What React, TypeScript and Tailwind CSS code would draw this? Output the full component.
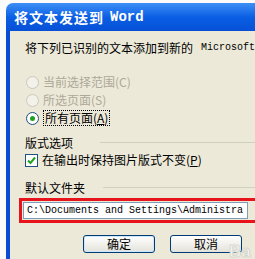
const cn = { fontFamily: '"Noto Sans CJK SC", "Noto Sans", sans-serif' };
const mono = { fontFamily: '"Liberation Mono", "DejaVu Sans Mono", monospace' };

function Radio({ checked, disabled }: { checked?: boolean; disabled?: boolean }) {
  return (
    <span
      className={
        "flex items-center justify-center w-[13px] h-[13px] rounded-full border " +
        (disabled ? "border-[#cac8bb] bg-[#f2f1ea]" : "border-[#1c5180] bg-white")
      }
    >
      {checked && <span className="w-[5px] h-[5px] rounded-full bg-[#21a121]" />}
    </span>
  );
}

function Section({ label, lineLeft }: { label: string; lineLeft: string }) {
  return (
    <div className="flex items-center h-[14px]">
      <span className="text-[12px] leading-[14px] text-black" style={cn}>
        {label}
      </span>
      <div className={"flex-1 h-[2px] border-t border-[#d0d0bf] border-b-white " + lineLeft} />
    </div>
  );
}

export default function App() {
  return (
    <div className="relative w-[255px] h-[259px] overflow-hidden bg-[#fbfbfb]">
      <div className="ml-[6px] mt-[3px] w-[300px] h-[256px] flex flex-col">
        {/* Title bar */}
        <div className="h-[28px] rounded-tl-[7px] bg-gradient-to-b from-[#3d8ff7] via-[#0a5fe4] to-[#0750d6] flex items-center pl-[8px]">
          <span className="text-white text-[14px] font-bold tracking-[1px]" style={cn}>
            将文本发送到
          </span>
          <span className="text-white text-[14px] font-bold ml-[6px]" style={mono}>
            Word
          </span>
        </div>

        {/* Body */}
        <div className="flex-1 flex border-l-[4px] border-[#0a4cd4]">
          <div className="flex-1 bg-[#ece9d8] flex flex-col pl-[15px] pt-[10px]">
            <div className="h-[14px] flex items-center text-[12px] leading-[14px] text-black whitespace-nowrap">
              <span style={cn}>将下列已识别的文本添加到新的</span>
              <span className="ml-[8px] text-[10px]" style={mono}>Microsoft</span>
            </div>

            <div className="mt-[18px] flex flex-col">
              <div className="h-[18px] flex items-center gap-[3px]">
                <span className="w-[15px] flex justify-center"><Radio disabled /></span>
                <span className="text-[12px] text-[#aca899]" style={cn}>当前选择范围(C)</span>
              </div>
              <div className="h-[18px] flex items-center gap-[3px]">
                <span className="w-[15px] flex justify-center"><Radio disabled /></span>
                <span className="text-[12px] text-[#aca899]" style={cn}>所选页面(S)</span>
              </div>
              <div className="h-[18px] flex items-center gap-[3px]">
                <span className="w-[15px] flex justify-center"><Radio checked /></span>
                <span className="text-[12px] text-black border border-dotted border-black px-[1px] leading-[14px]" style={cn}>
                  所有页面(<span className="underline">A</span>)
                </span>
              </div>
            </div>

            <div className="mt-[9px]">
              <Section label="版式选项" lineLeft="ml-[27px]" />
            </div>

            <div className="mt-[2px] h-[16px] flex items-center gap-[4px]">
              <span className="w-[13px] h-[13px] border border-[#1c5180] bg-white flex items-center justify-center">
                <svg width="9" height="9" viewBox="0 0 9 9">
                  <path d="M1 4.5 L3.5 7 L8 1.5" stroke="#21a121" strokeWidth="2" fill="none" />
                </svg>
              </span>
              <span className="text-[12px] text-black" style={cn}>
                在输出时保持图片版式不变(<span className="underline">P</span>)
              </span>
            </div>

            <div className="mt-[13px]">
              <Section label="默认文件夹" lineLeft="ml-[18px]" />
            </div>

            <div className="mt-[3px] -ml-[6px] h-[25px] border-[3px] border-[#e8141c] flex items-center px-[1px]">
              <div className="w-[225px] h-[17px] bg-white border border-[#7f9db9] flex items-center pl-[3px] overflow-hidden">
                <span className="text-[10px] text-black whitespace-nowrap" style={mono}>
                  C:\Documents and Settings\Administra
                </span>
              </div>
            </div>

            <div className="mt-[12px] flex gap-[15px] pl-[58px]">
              <button className="w-[72px] h-[18px] rounded-[3px] border border-[#003c74] bg-gradient-to-b from-white to-[#e3e2da] flex items-center justify-center text-[12px] text-black shadow-[inset_0_0_0_1px_#cee7ff]" style={cn}>
                确定
              </button>
              <button className="w-[72px] h-[18px] rounded-[3px] border border-[#003c74] bg-gradient-to-b from-white to-[#e3e2da] flex items-center justify-center text-[12px] text-black" style={cn}>
                取消
              </button>
            </div>
          </div>
        </div>
      </div>

      {/* watermark */}
      <div className="absolute left-[229px] top-[243px] flex items-end">
        <span className="text-[17px] font-bold text-[#f6f6f2] leading-none [-webkit-text-stroke:1px_#d8d8d0]" style={{ fontFamily: '"Liberation Sans", sans-serif' }}>
          Ba
        </span>
      </div>
    </div>
  );
}
